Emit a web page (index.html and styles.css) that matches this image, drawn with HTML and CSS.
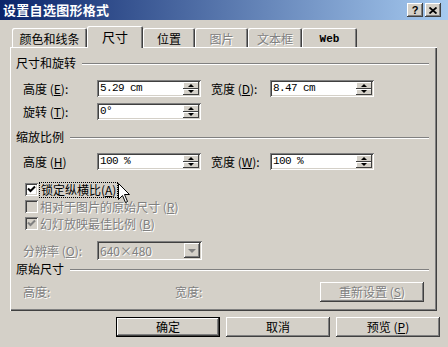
FILE: index.html
```html
<!DOCTYPE html>
<html lang="zh-CN">
<head>
  <meta charset="UTF-8" />
  <title>设置自选图形格式</title>
  <link rel="stylesheet" href="styles.css">
</head>
<body>
  <div class="dialog">
    <div class="titlebar">
      <span class="title">设置自选图形格式</span>
      <div class="caption-btns">
        <span class="cap-btn">?</span>
        <span class="cap-btn">
          <svg width="8" height="7" viewBox="0 0 8 7"><path d="M0.5 0.5 L7.5 6.5 M7.5 0.5 L0.5 6.5" stroke="#000" stroke-width="1.8" fill="none"/></svg>
        </span>
      </div>
    </div>

    <div class="tabs">
      <div class="tab t1">颜色和线条</div>
      <div class="tab active">尺寸</div>
      <div class="tab t3">位置</div>
      <div class="tab t4 off">图片</div>
      <div class="tab t5 off">文本框</div>
      <div class="tab t6 web">Web</div>
    </div>

    <div class="panel">
      <div class="group g1"><span>尺寸和旋转</span><i class="rule"></i></div>
      <div class="row r1">
        <span class="lbl">高度 (<u>E</u>):</span>
        <div class="field"><span class="val">5.29 cm</span><span class="spinner"><b class="up"></b><b class="down"></b></span></div>
        <span class="lbl2">宽度 (<u>D</u>):</span>
        <div class="field"><span class="val">8.47 cm</span><span class="spinner"><b class="up"></b><b class="down"></b></span></div>
      </div>
      <div class="row r2">
        <span class="lbl">旋转 (<u>T</u>):</span>
        <div class="field"><span class="val">0°</span><span class="spinner"><b class="up"></b><b class="down"></b></span></div>
      </div>

      <div class="group g2"><span>缩放比例</span><i class="rule"></i></div>
      <div class="row r3">
        <span class="lbl">高度 (<u>H</u>)</span>
        <div class="field"><span class="val">100 %</span><span class="spinner"><b class="up"></b><b class="down"></b></span></div>
        <span class="lbl2">宽度 (<u>W</u>):</span>
        <div class="field"><span class="val">100 %</span><span class="spinner"><b class="up"></b><b class="down"></b></span></div>
      </div>
      <div class="row check r4">
        <span class="box"><svg width="9" height="9" viewBox="0 0 9 9"><polyline points="1,3.5 3.5,6 8,1.5" stroke="#000" stroke-width="2" fill="none"/></svg></span>
        <span class="focus">锁定纵横比(<u>A</u>)</span>
      </div>
      <div class="row check">
        <span class="box off"></span>
        <span class="dim">相对于图片的原始尺寸 (<u>R</u>)</span>
      </div>
      <div class="row check">
        <span class="box off"><svg width="9" height="9" viewBox="0 0 9 9"><polyline points="1,3.5 3.5,6 8,1.5" stroke="#808080" stroke-width="2" fill="none"/></svg></span>
        <span class="dim">幻灯放映最佳比例 (<u>B</u>)</span>
      </div>
      <div class="row r7">
        <span class="lbl dim">分辨率 (<u>O</u>):</span>
        <div class="combo"><span class="val dim">640×480</span><span class="drop"><b class="down"></b></span></div>
      </div>

      <div class="group g3"><span>原始尺寸</span><i class="rule"></i></div>
      <div class="row r8">
        <span class="orig dim">高度:</span>
        <span class="orig2 dim">宽度:</span>
        <span class="btn reset"><span class="dim">重新设置 (<u>S</u>)</span></span>
      </div>
    </div>

    <div class="buttons">
      <span class="btn default">确定</span>
      <span class="btn">取消</span>
      <span class="btn">预览 (<u>P</u>)</span>
    </div>

    <svg class="cursor" width="13" height="21" viewBox="0 0 13 21">
      <path d="M0.5 0.5 L0.5 16.5 L4.5 12.5 L7.5 19.5 L9.5 18.5 L6.5 11.5 L11.5 11.5 Z" fill="#fff" stroke="#000" stroke-width="1"/>
    </svg>
  </div>
</body>
</html>
```

FILE: styles.css
```css
* { box-sizing: border-box; }
body { margin: 0; background: #d4d0c8; font-family: "Noto Sans CJK SC", "Noto Sans", sans-serif; font-size: 12px; line-height: 14px; color: #000; }
u { text-decoration: underline; text-underline-offset: 1px; }

.dialog { position: relative; width: 448px; height: 347px; background: #d4d0c8; overflow: hidden; }

/* title bar */
.titlebar { height: 20px; display: flex; align-items: center; justify-content: space-between; padding: 0 7px 0 3px; background: linear-gradient(to right, #0a246a, #a6caf0); }
.title { color: #fff; font-weight: bold; font-size: 13px; line-height: 20px; letter-spacing: 0.3px; }
.caption-btns { display: flex; gap: 2px; }
.cap-btn { width: 16px; height: 14px; display: flex; align-items: center; justify-content: center; background: #d4d0c8; font: bold 11px "Liberation Sans", sans-serif; box-shadow: inset -1px -1px #404040, inset 1px 1px #fff, inset -2px -2px #808080; }

/* tabs */
.tabs { height: 27px; display: flex; align-items: flex-end; padding-left: 12px; }
.tab { height: 19px; display: flex; align-items: center; justify-content: center; padding-top: 3px; border-radius: 2px 2px 0 0; box-shadow: inset 1px 1px #fff, inset -1px 0 #404040, inset -2px 0 #808080; }
.t1 { width: 75px; }
.tab.active { position: relative; z-index: 1; width: 56px; height: 22px; margin-bottom: -1px; background: #d4d0c8; font-size: 13px; padding-top: 0; }
.t3 { width: 52px; }
.t4 { width: 53px; }
.t5 { width: 54px; }
.t6 { width: 55px; }
.tab.off { color: #808080; text-shadow: 1px 1px #fff; }
.tab.web { font: bold 11px "Liberation Mono", monospace; }

/* panel */
.panel { width: 427px; height: 264px; margin-left: 10px; padding: 2px 4px 2px 6px; box-shadow: inset 1px 1px #fff, inset -1px -1px #404040, inset -2px -2px #808080; }
.group { display: flex; align-items: center; height: 14px; }
.group .rule { flex: 1; height: 2px; margin: 1px 4px 0 6px; border-top: 1px solid #808080; border-bottom: 1px solid #fff; }
.g1 { margin-top: 7px; }
.g2 { margin-top: 10px; }
.g3 { margin-top: 2px; }

.row { display: flex; align-items: center; height: 17px; margin-left: 7px; }
.r1 { margin-top: 10px; }
.r2 { margin-top: 6px; }
.r3 { margin-top: 9px; }
.r4 { margin-top: 11px; }
.r7 { margin-top: 9px; height: 19px; }
.r8 { margin-top: 6px; height: 20px; }
.lbl { width: 74px; }
.lbl2 { width: 59px; margin-left: 10px; }
.dim { color: #808080; text-shadow: 1px 1px #fff; }

.field { width: 104px; height: 17px; display: flex; align-items: stretch; padding: 2px; background: #fff; box-shadow: inset 1px 1px #808080, inset -1px -1px #fff, inset 2px 2px #404040, inset -2px -2px #d4d0c8; }
.val { flex: 1; padding-left: 1px; font-family: "Liberation Mono", monospace; font-size: 11px; letter-spacing: -0.6px; line-height: 13px; }
.spinner { width: 16px; display: flex; flex-direction: column; }
.spinner b, .drop { flex: 1; display: flex; align-items: center; justify-content: center; background: #d4d0c8; box-shadow: inset -1px -1px #404040, inset 1px 1px #fff; }
.up { position: relative; }
.up::after { content: ""; border: 3px solid transparent; border-bottom: 3px solid #000; border-top: 0; }
.down::after { content: ""; border: 3px solid transparent; border-top: 3px solid #000; border-bottom: 0; }

.check { height: 17px; }
.box { width: 13px; height: 13px; margin-left: 2px; margin-right: 2px; display: flex; align-items: center; justify-content: center; background: #fff; box-shadow: inset 1px 1px #808080, inset -1px -1px #fff, inset 2px 2px #404040, inset -2px -2px #d4d0c8; }
.box.off { background: #d4d0c8; }
.focus { padding: 0 1px; outline: 1px dotted #000; outline-offset: 0; }

.combo { width: 105px; height: 19px; display: flex; align-items: stretch; padding: 2px; background: #d4d0c8; box-shadow: inset 1px 1px #808080, inset -1px -1px #fff, inset 2px 2px #404040, inset -2px -2px #d4d0c8; }
.combo .val { font-family: "Noto Sans CJK SC", sans-serif; font-size: 12px; letter-spacing: 0; line-height: 15px; }
.drop { flex: 0 0 16px; box-shadow: inset -1px -1px #404040, inset 1px 1px #fff, inset -2px -2px #808080; }
.drop .down::after { border-top-color: #808080; border-width: 4px 4px 0; }
.drop .down { display: flex; }

.orig { width: 152px; }
.orig2 { width: 145px; }

.btn { height: 20px; display: flex; align-items: center; justify-content: center; background: #d4d0c8; box-shadow: inset -1px -1px #404040, inset 1px 1px #fff, inset -2px -2px #808080; }
.reset { width: 104px; }
.buttons { display: flex; gap: 6px; margin-top: 6px; padding-left: 116px; }
.buttons .btn { width: 104px; }
.btn.default { border: 1px solid #000; }

.cursor { position: absolute; left: 118px; top: 183px; }
```
